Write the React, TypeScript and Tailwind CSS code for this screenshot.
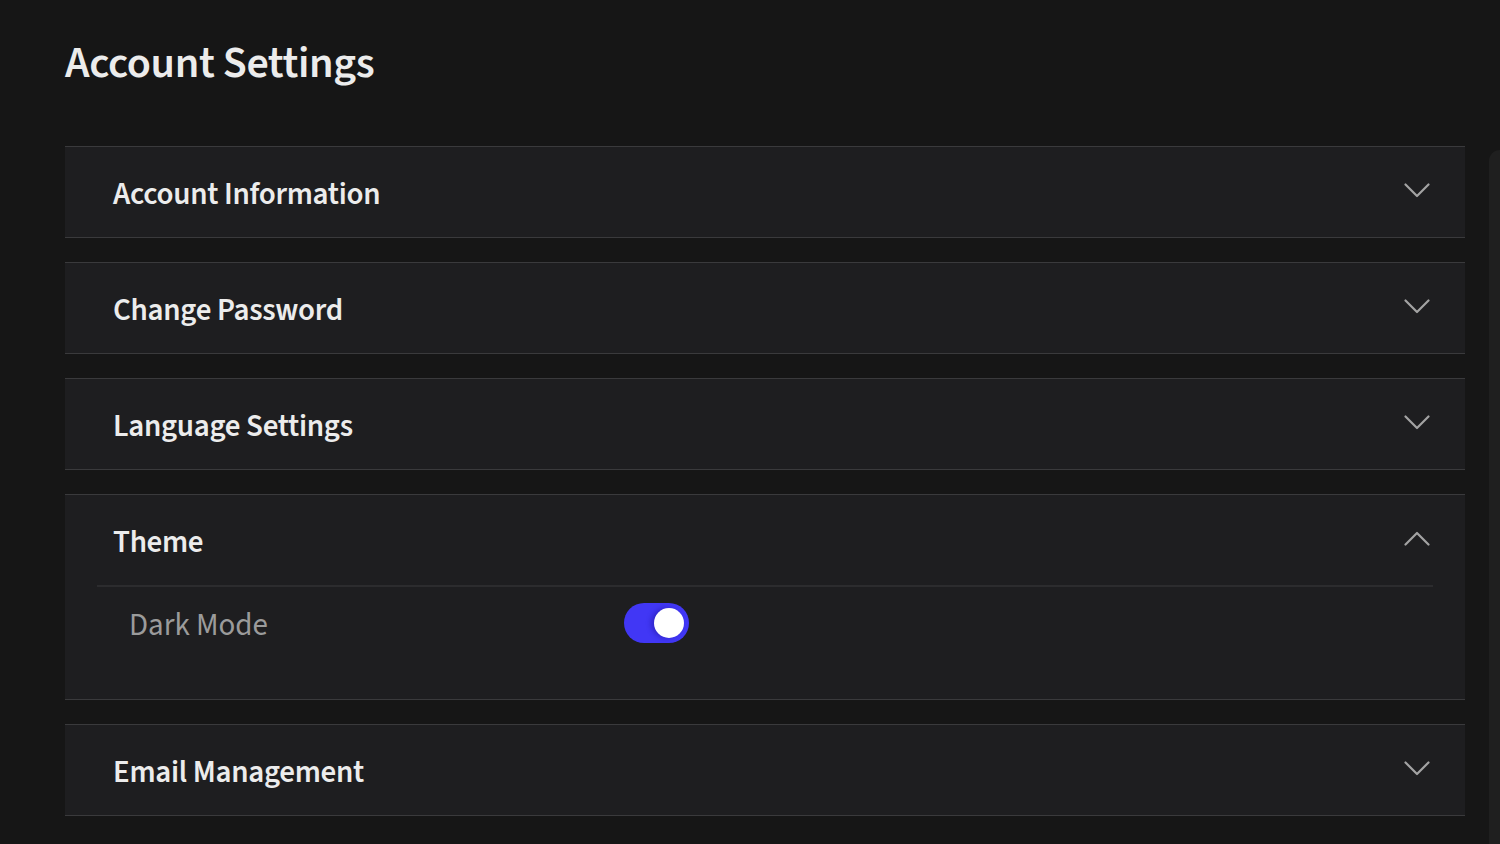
import React from "react";

const font = { fontFamily: '"Source Sans 3", "Source Sans Pro", Lato, "Noto Sans", sans-serif' };

function Chevron({ up }: { up?: boolean }) {
  return (
    <svg width="26" height="15" viewBox="0 0 26 15" fill="none" className="block">
      <polyline
        points={up ? "1.5,13.5 13,2 24.5,13.5" : "1.5,1.5 13,13 24.5,1.5"}
        stroke="#a3a3a3"
        strokeWidth="2.2"
        strokeLinecap="round"
        strokeLinejoin="round"
      />
    </svg>
  );
}

function Header({ title, open }: { title: string; open?: boolean }) {
  return (
    <div className="h-[90px] flex items-center justify-between pl-[48px] pr-[35px]">
      <span className="text-[31px] font-semibold text-[#ececec] tracking-[-0.3px] leading-none pt-[4px]">{title}</span>
      <span className="-mt-[4px]">
        <Chevron up={open} />
      </span>
    </div>
  );
}

function Card({ title }: { title: string }) {
  return (
    <div className="bg-[#1e1e20] border-t border-b border-[#3a3a3c]">
      <Header title={title} />
    </div>
  );
}

export default function App() {
  return (
    <div className="min-h-screen bg-[#161616] flex" style={font}>
      <main className="flex-1 pl-[65px] pr-[24px]">
        <h1 className="h-[146px] pt-[38px] text-[44px] font-semibold text-[#ececec] tracking-[-0.4px] leading-[52px]">
          Account Settings
        </h1>
        <div className="flex flex-col gap-[24px]">
          <Card title="Account Information" />
          <Card title="Change Password" />
          <Card title="Language Settings" />
          <div className="bg-[#1e1e20] border-t border-b border-[#3a3a3c]">
            <Header title="Theme" open />
            <div className="mx-[32px] h-[2px] bg-[#2c2c2e]" />
            <div className="mx-[32px] pl-[32px] pt-[16px] pb-[56px] flex items-center">
              <span className="w-[495px] text-[31px] text-[#9b9b9b] leading-none pt-[5px]">Dark Mode</span>
              <div className="w-[65px] h-[40px] rounded-full bg-[#4137f5] flex items-center justify-end pr-[5px]">
                <div className="w-[30px] h-[30px] rounded-full bg-white shadow-[-3px_0_5px_rgba(20,10,120,0.35)]" />
              </div>
            </div>
          </div>
          <Card title="Email Management" />
        </div>
      </main>
      <div className="w-[11px] mt-[150px] bg-[#1f1f1f] rounded-tl-[14px]" />
    </div>
  );
}
